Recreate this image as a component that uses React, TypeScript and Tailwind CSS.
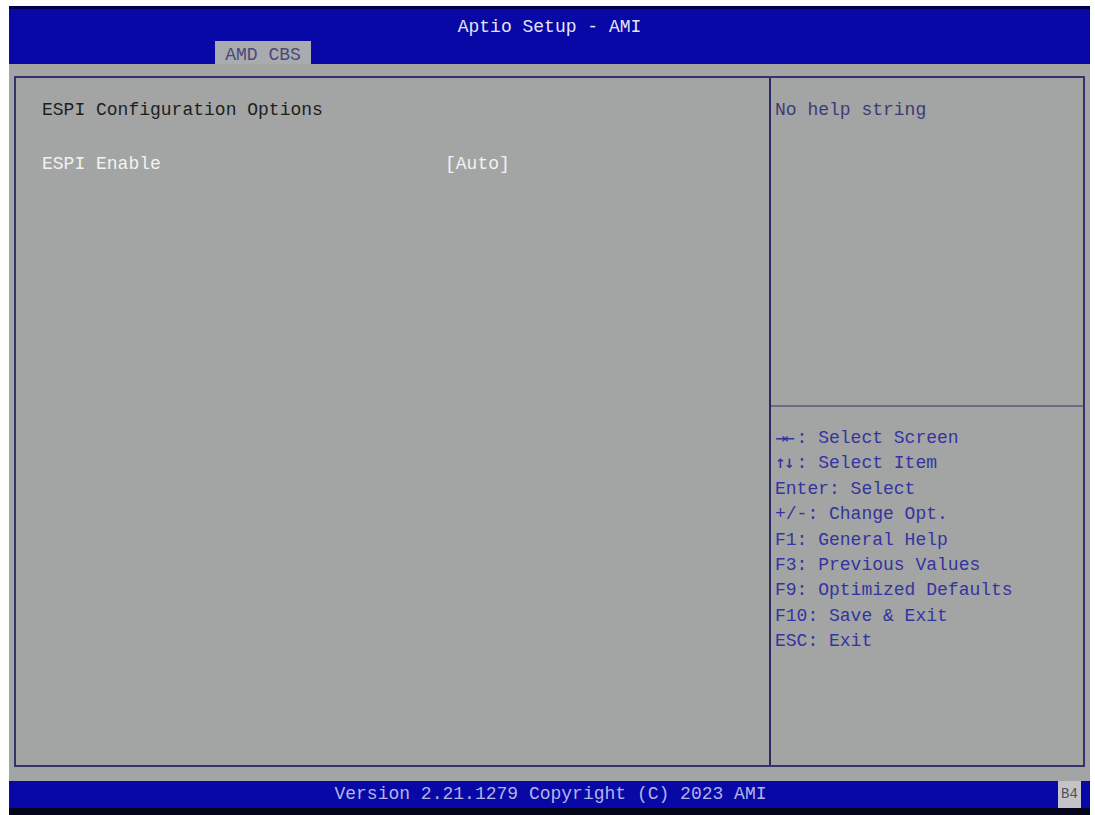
const mono = { fontFamily: '"Liberation Mono", "DejaVu Sans Mono", monospace' }

const helpLines: [string, string][] = [
  ['→←', ': Select Screen'],
  ['↑↓', ': Select Item'],
  ['', 'Enter: Select'],
  ['', '+/-: Change Opt.'],
  ['', 'F1: General Help'],
  ['', 'F3: Previous Values'],
  ['', 'F9: Optimized Defaults'],
  ['', 'F10: Save & Exit'],
  ['', 'ESC: Exit'],
]

export default function App() {
  return (
    <div
      className="h-[815px] w-[1095px] overflow-hidden bg-white pl-[9px] pr-[5px] pt-[6px] text-[18px]"
      style={mono}
    >
      <div className="flex h-[809px] flex-col">
        {/* header */}
        <div className="flex h-[58px] flex-col border-t-[3px] border-[#00004a] bg-[#0808a6]">
          <div className="flex h-[32px] items-center justify-center pt-[4px] text-[#e4e4f4]">
            Aptio Setup - AMI
          </div>
          <div className="flex h-[23px]">
            <div className="ml-[206px] flex w-[96px] items-center justify-center bg-[#a9abaf] pt-[5px] text-[#4a4a78]">
              AMD CBS
            </div>
          </div>
        </div>

        {/* body */}
        <div className="flex h-[717px] flex-col bg-[#a3a5a4] px-[5px] pb-[14px] pt-[12px]">
          <div className="flex flex-1 border-2 border-[#33336e]">
            <div className="w-[755px] border-r-2 border-[#2a2a62] pl-[26px] pt-[19px]">
              <div className="leading-[26px] text-[#1e1e1e]">ESPI Configuration Options</div>
              <div className="mt-[28px] flex leading-[26px] text-[#f2f2f2]">
                <span className="w-[403px]">ESPI Enable</span>
                <span>[Auto]</span>
              </div>
            </div>
            <div className="flex flex-1 flex-col">
              <div className="h-[329px] border-b-2 border-[#6a6a8a] pl-[4px] pt-[19px] leading-[26px] text-[#3c3c74]">
                No help string
              </div>
              <div className="pl-[4px] pt-[19px] leading-[25.4px] text-[#3434a0]">
                {helpLines.map(([arrows, rest]) => (
                  <div key={rest} className="flex">
                    {arrows && (
                      <span
                        className="inline-block w-[21.6px] text-[13px] font-bold tracking-[-2px]"
                        style={{ fontFamily: '"DejaVu Sans", sans-serif' }}
                      >
                        {arrows}
                      </span>
                    )}
                    <span>{rest}</span>
                  </div>
                ))}
              </div>
            </div>
          </div>
        </div>

        {/* footer */}
        <div className="flex h-[27px] items-center bg-[#0808a6]">
          <div className="flex-1 pl-[34px] text-center text-[#b4b4e8]">
            Version 2.21.1279 Copyright (C) 2023 AMI
          </div>
          <div className="mr-[9px] flex h-[27px] w-[23px] items-center justify-center bg-[#c4c4c8] text-[14px] text-[#505058]">
            B4
          </div>
        </div>
        <div className="h-[7px] bg-[#05051c]" />
      </div>
    </div>
  )
}
